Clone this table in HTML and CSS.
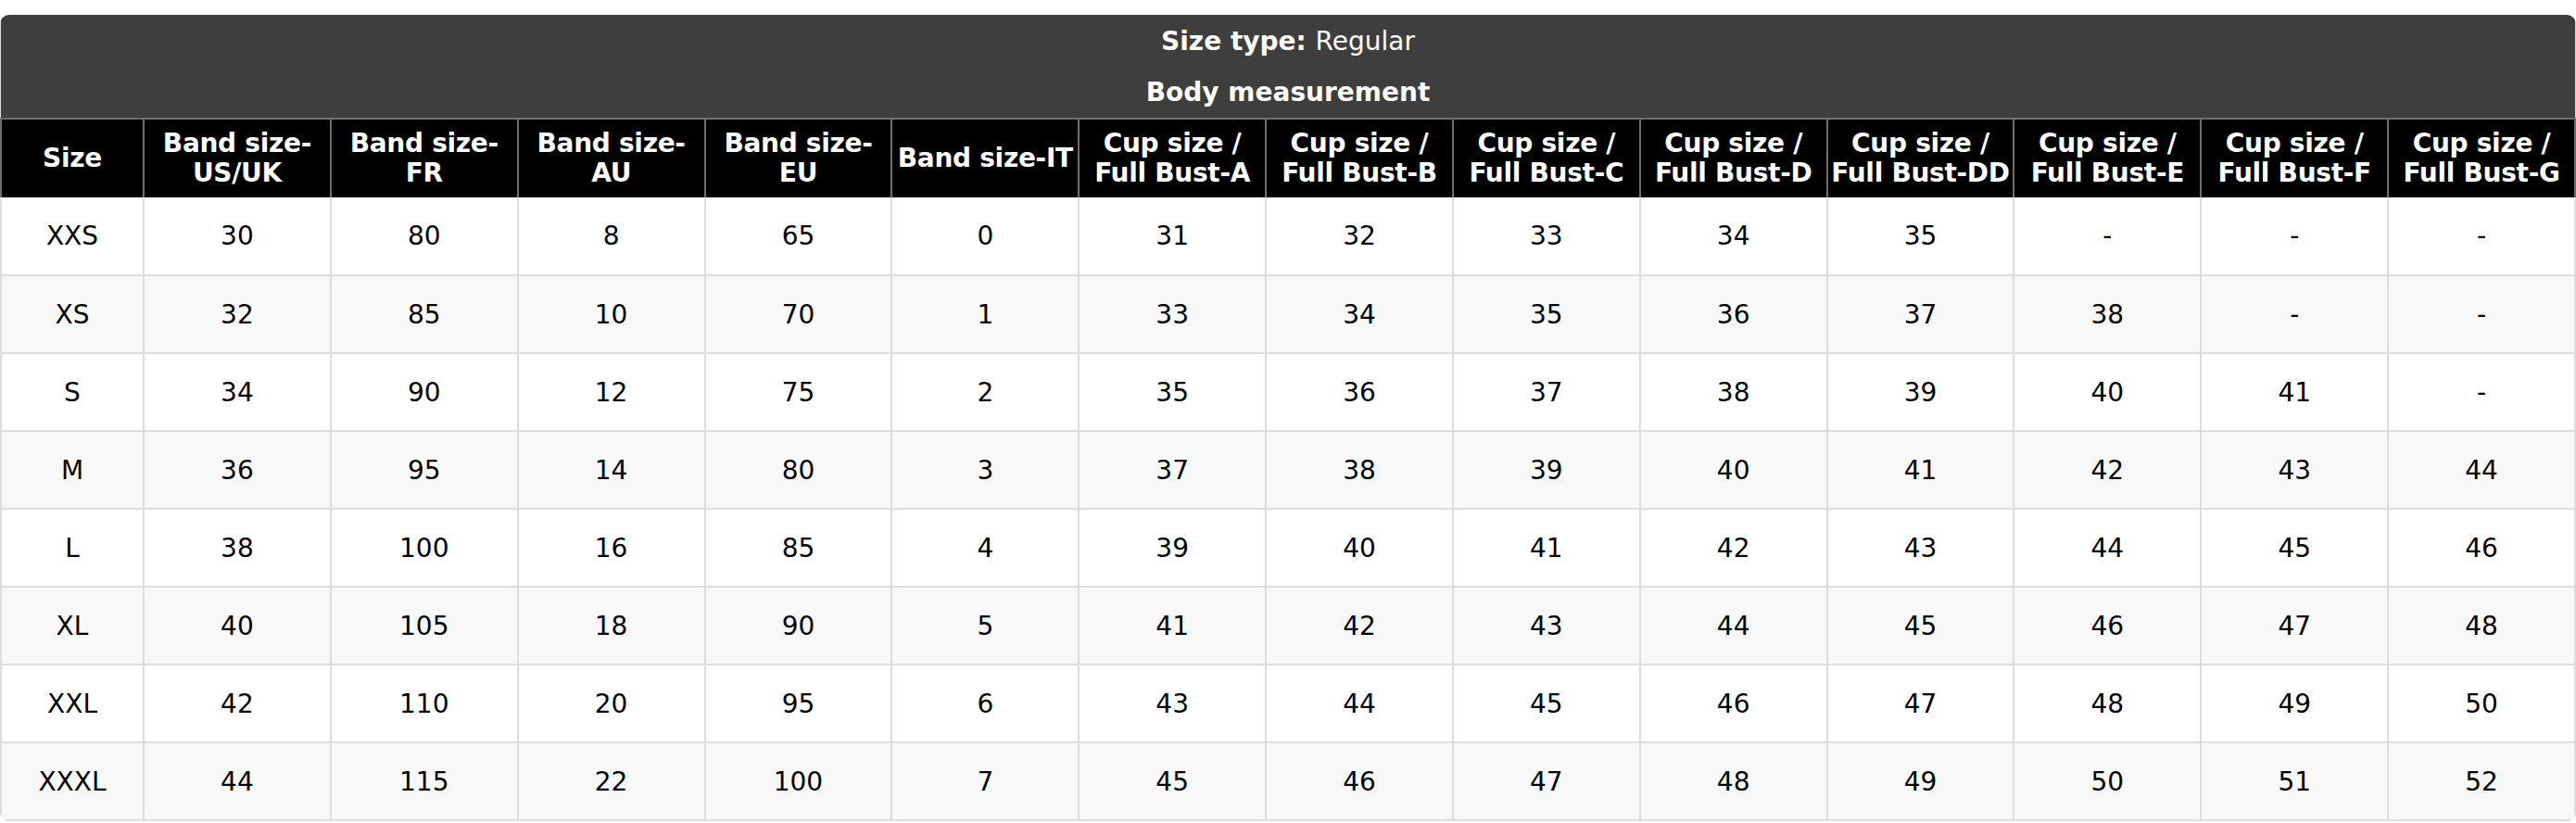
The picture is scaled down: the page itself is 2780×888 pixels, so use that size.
FILE: index.html
```html
<!DOCTYPE html>
<html lang="en">
<head>
<meta charset="utf-8">
<title>Size chart</title>
<link rel="stylesheet" href="styles.css">
</head>
<body>
<div class="chart">
  <table class="size-table">
    <colgroup>
      <col class="col-size">
      <col span="13">
    </colgroup>
    <thead>
      <tr class="band">
        <th colspan="14"><b>Size type:</b> <span class="regular">Regular</span></th>
      </tr>
      <tr class="band">
        <th colspan="14">Body measurement</th>
      </tr>
      <tr class="cols">
        <th>Size</th>
        <th>Band size-US/UK</th>
        <th>Band size-FR</th>
        <th>Band size-AU</th>
        <th>Band size-EU</th>
        <th>Band size-IT</th>
        <th>Cup size / Full Bust-A</th>
        <th>Cup size / Full Bust-B</th>
        <th>Cup size / Full Bust-C</th>
        <th>Cup size / Full Bust-D</th>
        <th>Cup size / Full Bust-DD</th>
        <th>Cup size / Full Bust-E</th>
        <th>Cup size / Full Bust-F</th>
        <th>Cup size / Full Bust-G</th>
      </tr>
    </thead>
    <tbody>
      <tr><td>XXS</td><td>30</td><td>80</td><td>8</td><td>65</td><td>0</td><td>31</td><td>32</td><td>33</td><td>34</td><td>35</td><td>-</td><td>-</td><td>-</td></tr>
      <tr><td>XS</td><td>32</td><td>85</td><td>10</td><td>70</td><td>1</td><td>33</td><td>34</td><td>35</td><td>36</td><td>37</td><td>38</td><td>-</td><td>-</td></tr>
      <tr><td>S</td><td>34</td><td>90</td><td>12</td><td>75</td><td>2</td><td>35</td><td>36</td><td>37</td><td>38</td><td>39</td><td>40</td><td>41</td><td>-</td></tr>
      <tr><td>M</td><td>36</td><td>95</td><td>14</td><td>80</td><td>3</td><td>37</td><td>38</td><td>39</td><td>40</td><td>41</td><td>42</td><td>43</td><td>44</td></tr>
      <tr><td>L</td><td>38</td><td>100</td><td>16</td><td>85</td><td>4</td><td>39</td><td>40</td><td>41</td><td>42</td><td>43</td><td>44</td><td>45</td><td>46</td></tr>
      <tr><td>XL</td><td>40</td><td>105</td><td>18</td><td>90</td><td>5</td><td>41</td><td>42</td><td>43</td><td>44</td><td>45</td><td>46</td><td>47</td><td>48</td></tr>
      <tr><td>XXL</td><td>42</td><td>110</td><td>20</td><td>95</td><td>6</td><td>43</td><td>44</td><td>45</td><td>46</td><td>47</td><td>48</td><td>49</td><td>50</td></tr>
      <tr><td>XXXL</td><td>44</td><td>115</td><td>22</td><td>100</td><td>7</td><td>45</td><td>46</td><td>47</td><td>48</td><td>49</td><td>50</td><td>51</td><td>52</td></tr>
    </tbody>
  </table>
</div>
</body>
</html>
```

FILE: styles.css
```css
html, body {
  margin: 0;
  padding: 0;
  background: #ffffff;
}

body {
  padding-top: 16px;
  font-family: "DejaVu Sans", "Noto Sans", sans-serif;
  font-size: 28px;
  color: #000000;
}

.chart {
  width: 2780px;
  border-radius: 10px;
  overflow: hidden;
  box-shadow: inset 0 0 0 2px #dddddd;
}

.size-table {
  width: 100%;
  table-layout: fixed;
  border-collapse: collapse;
  text-align: center;
}

.col-size {
  width: 154px;
}

.band {
  height: 56px;
  background: #3e3e3e;
  color: #ffffff;
}

.band th {
  padding: 0;
  font-weight: bold;
  border: 0;
  vertical-align: middle;
}

.band:nth-child(2) th {
  border-bottom: 2px solid #6e6e6e;
}

.band .regular {
  font-weight: normal;
}

.cols {
  height: 85px;
  background: #000000;
  color: #ffffff;
}

.cols th {
  padding: 0;
  font-weight: bold;
  line-height: 32px;
  letter-spacing: -0.3px;
  vertical-align: middle;
  border-left: 2px solid #6e6e6e;
  border-right: 2px solid #6e6e6e;
  border-top: 2px solid #6e6e6e;
  border-bottom: 0;
}

.size-table tbody tr {
  height: 84px;
  background: #ffffff;
}

.size-table tbody tr:nth-child(even) {
  background: #f8f8f8;
}

.size-table td {
  padding: 0 4px;
  vertical-align: middle;
  border: 2px solid #dddddd;
  border-top: 0;
}
```
